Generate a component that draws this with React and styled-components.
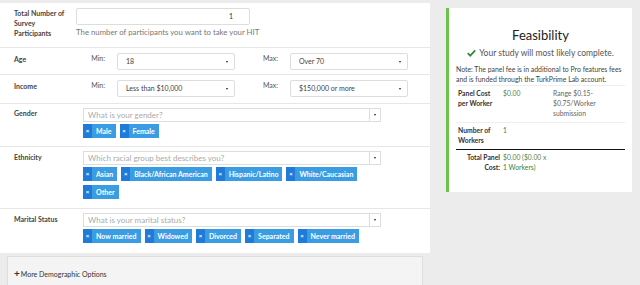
import React from 'react';
import styled, { createGlobalStyle } from 'styled-components';

const GlobalStyle = createGlobalStyle`
  html, body {
    margin: 0;
    padding: 0;
    background: #ececec;
    font-family: Lato, "Open Sans", "Liberation Sans", sans-serif;
    color: #333;
  }
`;

const Page = styled.div`
  display: flex;
  align-items: flex-start;
  width: 640px;
  height: 285px;
  overflow: hidden;
  padding-top: 3px;
  box-sizing: border-box;
`;

const LeftColumn = styled.div`
  width: 430px;
  display: flex;
  flex-direction: column;
  gap: 3px;
`;

const FormPanel = styled.div`
  background: #fff;
`;

const Row = styled.div`
  display: flex;
  align-items: flex-start;
  height: ${(p) => p.h}px;
  padding-top: ${(p) => p.pt}px;
  box-sizing: border-box;
  border-bottom: ${(p) => (p.last ? 'none' : '1px solid #e6e6e6')};
`;

const Label = styled.div`
  width: ${(p) => p.w || 62}px;
  padding-left: 14px;
  padding-top: ${(p) => p.pt || 0}px;
  font-size: 7px;
  font-weight: 700;
  line-height: 10px;
  color: #444;
  flex-shrink: 0;
  box-sizing: content-box;
  span {
    display: block;
    max-width: ${(p) => p.tw || 200}px;
  }
`;

const FieldColumn = styled.div`
  display: flex;
  flex-direction: column;
`;

const NumberInput = styled.div`
  width: 174px;
  height: 17px;
  box-sizing: border-box;
  border: 1px solid #ddd;
  border-radius: 2px;
  font-size: 7px;
  line-height: 15px;
  text-align: right;
  padding-right: 16px;
`;

const Help = styled.div`
  margin-top: 2px;
  font-size: 7.8px;
  color: #777;
`;

const MinMax = styled.div`
  width: ${(p) => p.w}px;
  font-size: 7px;
  color: #555;
  padding-top: 1px;
  text-align: right;
  padding-right: 12px;
  box-sizing: border-box;
  flex-shrink: 0;
`;

const Select = styled.div`
  width: 118px;
  height: 17px;
  box-sizing: border-box;
  border: 1px solid #ddd;
  border-radius: 2px;
  font-size: 7px;
  line-height: 15px;
  padding-left: 8px;
  color: #444;
  position: relative;
  flex-shrink: 0;
  &::after {
    content: '';
    position: absolute;
    right: 6px;
    top: 7px;
    border-left: 1.5px solid transparent;
    border-right: 1.5px solid transparent;
    border-top: 2px solid #222;
  }
`;

const MultiWrap = styled.div`
  display: flex;
  flex-direction: column;
  gap: 2px;
  width: 298px;
`;

const MultiInput = styled.div`
  display: flex;
  height: 14px;
  box-sizing: border-box;
  border: 1px solid #ddd;
`;

const Placeholder = styled.div`
  flex: 1;
  font-size: 8px;
  color: #aaa;
  line-height: 12px;
  padding-left: 4px;
`;

const Caret = styled.div`
  width: 10px;
  border-left: 1px solid #ddd;
  position: relative;
  &::after {
    content: '';
    position: absolute;
    left: 3.5px;
    top: 5px;
    border-left: 1.5px solid transparent;
    border-right: 1.5px solid transparent;
    border-top: 2px solid #222;
  }
`;

const Tags = styled.div`
  display: flex;
  flex-wrap: wrap;
  gap: 4px;
  width: 290px;
`;

const Tag = styled.div`
  display: flex;
  height: 14px;
  font-size: 7px;
  font-weight: 700;
  color: #fff;
  line-height: 14px;
`;

const TagX = styled.span`
  width: 9px;
  background: #1f7ad8;
  text-align: center;
  font-size: 6px;
`;

const TagText = styled.span`
  background: #3a9de3;
  padding: 0 4px;
`;

const MorePanel = styled.div`
  margin-left: 7px;
  width: 416px;
  height: 40px;
  box-sizing: border-box;
  background: #f4f4f4;
  border: 1px solid #dedede;
  padding: 10px 0 0 6px;
  font-size: 7px;
  color: #333;
`;

const Plus = styled.span`
  font-weight: 700;
  font-size: 10px;
  margin-right: 1px;
`;

const Card = styled.div`
  margin-left: 16px;
  margin-top: 5px;
  width: 186px;
  height: 184px;
  box-sizing: border-box;
  background: #fff;
  border-left: 3px solid #6cc24a;
  padding: 0 7px;
`;

const Title = styled.div`
  text-align: center;
  font-size: 13px;
  color: #222;
  margin-top: 19px;
  line-height: 16px;
`;

const Status = styled.div`
  text-align: center;
  font-size: 8.5px;
  color: #555;
  margin-top: 5px;
  svg {
    vertical-align: -1px;
    margin-right: 3px;
  }
`;

const Note = styled.div`
  font-size: 6.9px;
  line-height: 10px;
  color: #444;
  margin-top: 6px;
  padding-bottom: 1px;
  border-bottom: 1px solid #eee;
`;

const CostRow = styled.div`
  display: grid;
  grid-template-columns: 45px 50px 64px;
  font-size: 6.8px;
  line-height: 10px;
  padding: 2px 0 4px 2px;
  border-bottom: ${(p) => p.line};
`;

const CostLabel = styled.div`
  font-weight: 700;
  color: #333;
  text-align: ${(p) => p.align || 'left'};
  padding-right: ${(p) => (p.align ? '3px' : '4px')};
`;

const Money = styled.div`
  color: #5b7f4a;
  max-width: ${(p) => p.mw || 50}px;
`;

const Workers = styled.span`
  color: #3f7f2f;
`;

const Muted = styled.div`
  color: #666;
`;

const Check = () => (
  <svg width="9" height="8" viewBox="0 0 12 10">
    <path d="M1 5.2 L4.3 8.5 L11 1.5" fill="none" stroke="#2f8a3f" strokeWidth="2.4" />
  </svg>
);

const TagList = ({ items }) => (
  <Tags>
    {items.map((t) => (
      <Tag key={t}>
        <TagX>×</TagX>
        <TagText>{t}</TagText>
      </Tag>
    ))}
  </Tags>
);

const MultiField = ({ placeholder, items }) => (
  <MultiWrap>
    <MultiInput>
      <Placeholder>{placeholder}</Placeholder>
      <Caret />
    </MultiInput>
    <TagList items={items} />
  </MultiWrap>
);

const App = () => (
  <>
    <GlobalStyle />
    <Page>
      <LeftColumn>
        <FormPanel>
          <Row h={45} pt={5}>
            <Label tw={52}>
              <span>Total Number of Survey Participants</span>
            </Label>
            <FieldColumn>
              <NumberInput>1</NumberInput>
              <Help>The number of participants you want to take your HIT</Help>
            </FieldColumn>
          </Row>
          <Row h={27} pt={5}>
            <Label w={77} pt={1}>Age</Label>
            <MinMax w={26}>Min:</MinMax>
            <Select>18</Select>
            <MinMax w={55}>Max:</MinMax>
            <Select>Over 70</Select>
          </Row>
          <Row h={29} pt={5}>
            <Label w={77} pt={1}>Income</Label>
            <MinMax w={26}>Min:</MinMax>
            <Select>Less than $10,000</Select>
            <MinMax w={55}>Max:</MinMax>
            <Select>$150,000 or more</Select>
          </Row>
          <Row h={43} pt={4}>
            <Label w={69}>Gender</Label>
            <MultiField placeholder="What is your gender?" items={['Male', 'Female']} />
          </Row>
          <Row h={62} pt={4}>
            <Label w={69} pt={1}>Ethnicity</Label>
            <MultiField
              placeholder="Which racial group best describes you?"
              items={['Asian', 'Black/African American', 'Hispanic/Latino', 'White/Caucasian', 'Other']}
            />
          </Row>
          <Row h={44} pt={4} last>
            <Label w={69} pt={1}>Marital Status</Label>
            <MultiField
              placeholder="What is your marital status?"
              items={['Now married', 'Widowed', 'Divorced', 'Separated', 'Never married']}
            />
          </Row>
        </FormPanel>
        <MorePanel>
          <Plus>+</Plus>More Demographic Options
        </MorePanel>
      </LeftColumn>
      <Card>
        <Title>Feasibility</Title>
        <Status>
          <Check />
          Your study will most likely complete.
        </Status>
        <Note>
          Note: The panel fee is in additional to Pro features fees and is funded through the TurkPrime Lab account.
        </Note>
        <CostRow line="1px solid #eee">
          <CostLabel>Panel Cost per Worker</CostLabel>
          <Money>$0.00</Money>
          <Muted>Range $0.15-{'\u200b'}$0.75/Worker submission</Muted>
        </CostRow>
        <CostRow line="1.5px solid #111">
          <CostLabel>Number of Workers</CostLabel>
          <Muted>1</Muted>
          <div />
        </CostRow>
        <CostRow line="none">
          <CostLabel align="right">Total Panel Cost:</CostLabel>
          <Money mw={46}>
            $0.00 ($0.00 x <Workers>1 Workers)</Workers>
          </Money>
        </CostRow>
      </Card>
    </Page>
  </>
);

export default App;
